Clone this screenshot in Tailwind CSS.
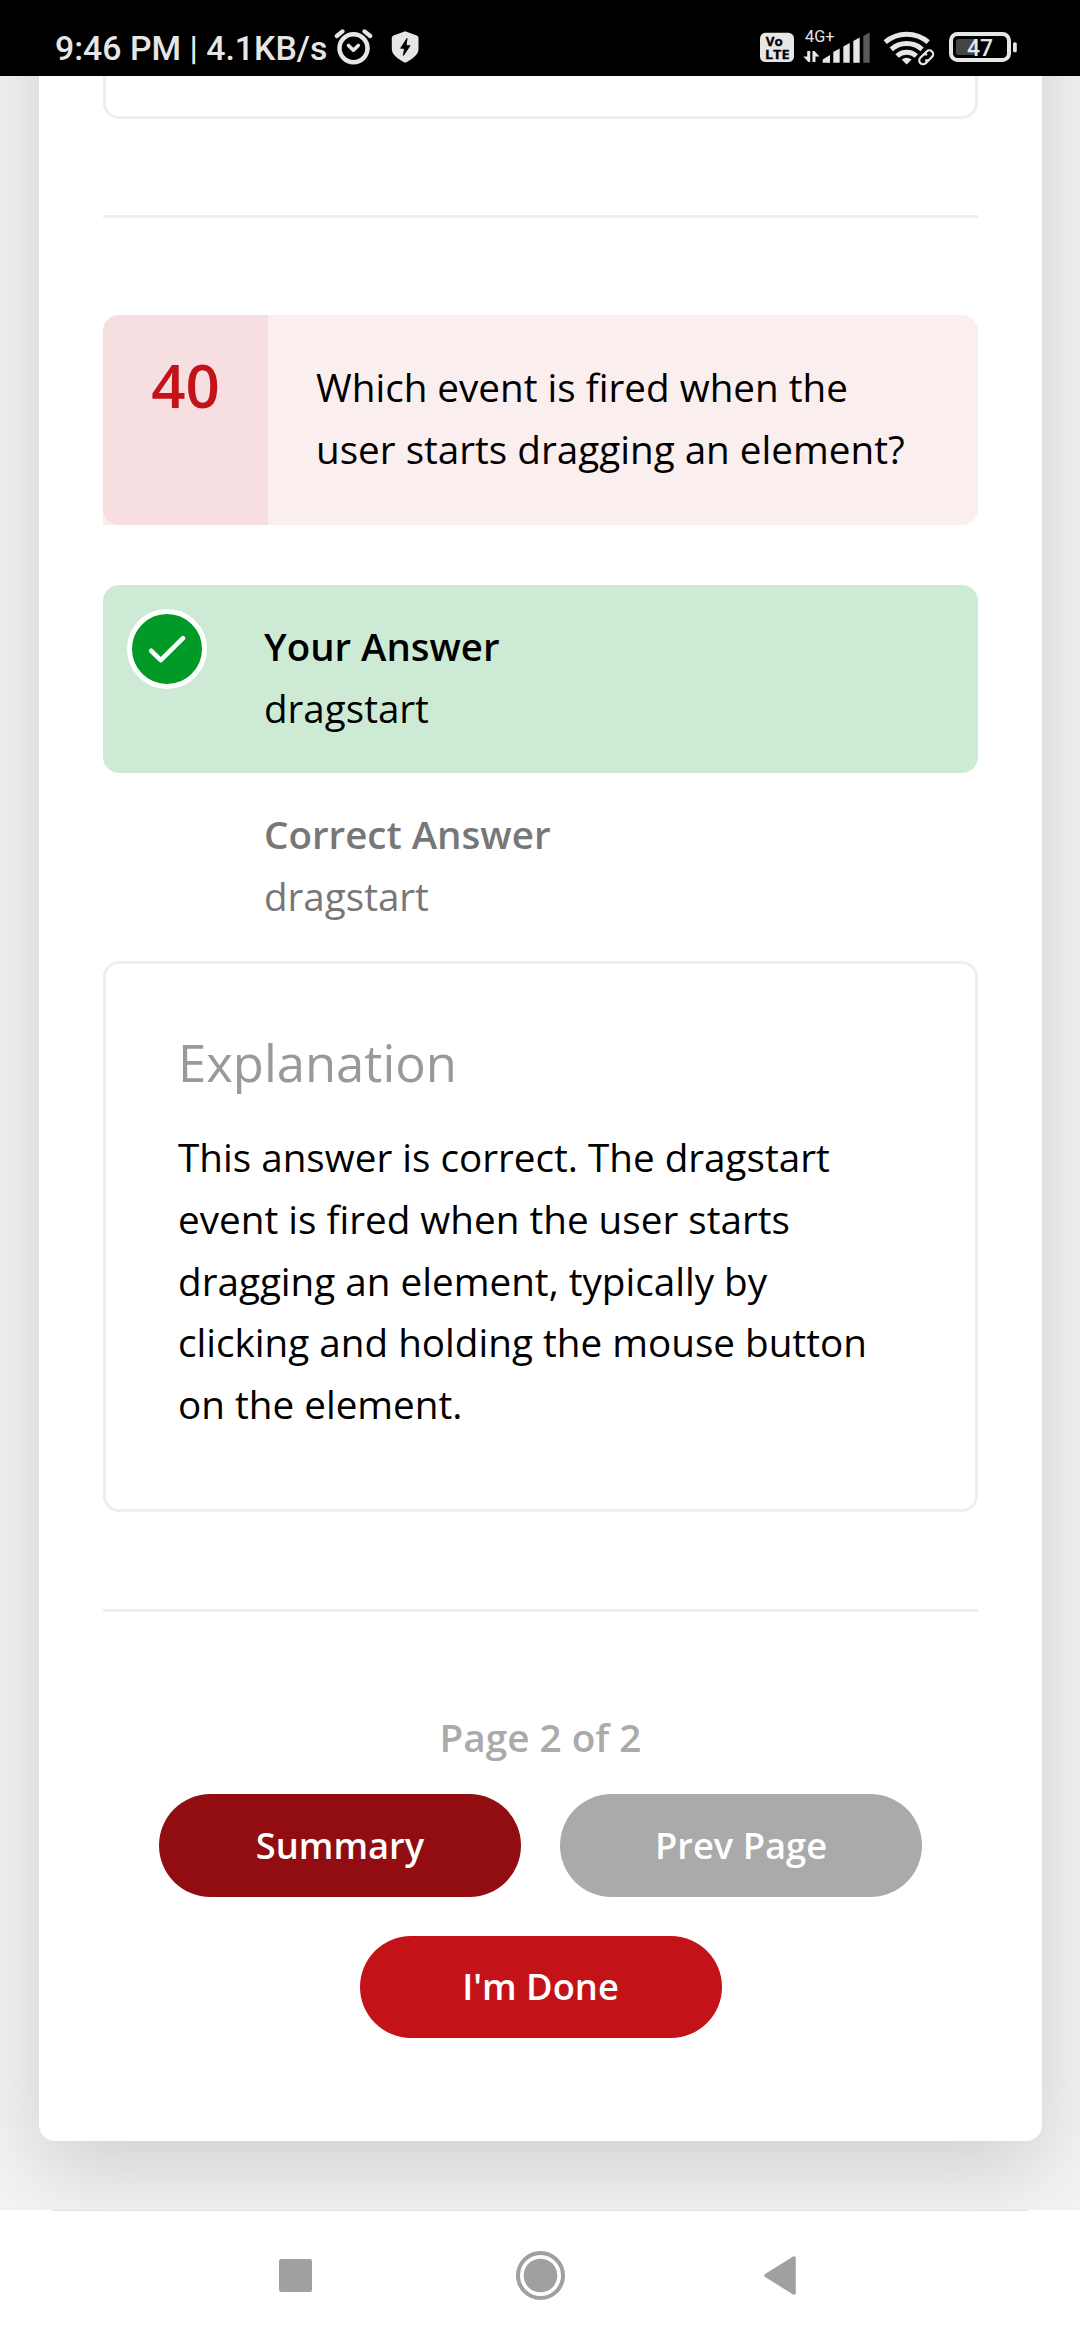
<!DOCTYPE html>
<html lang="en">
<head>
<meta charset="utf-8">
<title>Quiz Results</title>
<script src="https://cdn.jsdelivr.net/npm/@tailwindcss/browser@4"></script>
</head>
<body class="w-[1080px] h-[2340px] overflow-hidden bg-white text-black font-['Open_Sans',sans-serif]">

  <!-- Status bar -->
  <header class="flex h-[76px] items-start justify-between bg-black pt-[28px] pl-[55px] pr-[62px] text-[#e6e6e6]">
    <div class="flex items-start">
      <span class="w-[279px] whitespace-nowrap font-['Roboto',sans-serif] text-[33.8px] font-medium leading-[41px]">9:46 PM | 4.1KB/s</span>
      <svg class="h-[38px] w-[40px]" viewBox="0 0 40 38" fill="none" stroke="#e6e6e6" stroke-linecap="round">
        <circle cx="19.5" cy="20.3" r="14" stroke-width="4.500"/>
        <path d="M2.800 8 8.500 3.400M36.200 8 30.500 3.400" stroke-width="4.200"/>
        <path d="m14.500 17.500 4.900 4.700 4.900-4.700" stroke-width="3.600" stroke-linejoin="round"/>
      </svg>
      <svg class="ml-[17px] h-[38px] w-[29px]" viewBox="0 0 29 38">
        <path d="M14.200 3.200 25.800 7.400q1.700.7 1.700 2.400V21c0 6-6.500 10.400-13.300 13.700C7.400 31.400.8 27 .8 21V9.800q0-1.700 1.700-2.400z" fill="#e6e6e6"/>
        <path d="m16 10.500-6.300 9.700h3.900l-1.200 7.200 6.600-9.700h-4z" fill="#000" stroke="#000" stroke-width="1" stroke-linejoin="round"/>
      </svg>
    </div>
    <div class="flex items-start">
      <svg class="h-[38px] w-[34px]" viewBox="0 0 34 38" font-family="Open Sans, sans-serif" font-weight="700" stroke="#000" stroke-width="0.300">
        <rect y="4.800" width="34" height="29.200" rx="5.500" fill="#e6e6e6" stroke="none"/>
        <text x="5.700" y="17.800" font-size="12.500" textLength="17" lengthAdjust="spacingAndGlyphs">Vo</text>
        <text x="5" y="30.800" font-size="13" textLength="24.500" lengthAdjust="spacingAndGlyphs">LTE</text>
      </svg>
      <svg class="ml-[9px] h-[38px] w-[68px]" viewBox="0 0 68 38" fill="#e6e6e6">
        <text x="2" y="14" font-family="Roboto, sans-serif" font-size="16.300">4G+</text>
        <path d="M7.200 23v11H5.300L.3 28.600h3.900V23zM9.500 34V23h1.900l5 5.400h-3.900V34z"/>
        <path d="M19.700 31.500 27 27v7.700h-7.300zM30.300 24l6.400-3.500v14.200h-6.400zM40.300 18.500l6.400-3.500v19.700h-6.400zM50.300 13l6.400-3.500v25.200h-6.400z"/>
        <path d="M60.300 8l6.400-3.500v30.200h-6.400z" fill="#5a5a5a"/>
      </svg>
      <svg class="ml-[12px] h-[40px] w-[52px]" viewBox="0 0 52 40" fill="none" stroke="#e6e6e6">
        <path d="M2.200 14.200a33 33 0 0 1 43 0" stroke-width="5"/>
        <path d="M8.300 21.300a23.500 23.500 0 0 1 30.800 0" stroke-width="5"/>
        <path d="M14.100 28a14.500 14.500 0 0 1 19.200 0" stroke-width="5"/>
        <path d="M18.700 31.500q5-3.600 10 0l-5 5z" fill="#e6e6e6" stroke="none"/>
        <g transform="rotate(-45 43.200 29.300)">
          <rect x="33" y="23" width="20" height="12.600" rx="6.300" fill="#000" stroke="none"/>
          <path d="M45 33.100h-6.200a3.800 3.800 0 0 1 0-7.600h3.300a3.800 3.800 0 0 1 3.600 2.600M41.400 25.500h6.200a3.800 3.800 0 0 1 0 7.600h-3.300a3.800 3.800 0 0 1-3.600-2.600" stroke-width="2.200"/>
        </g>
      </svg>
      <svg class="ml-[14px] h-[38px] w-[69px]" viewBox="0 0 69 38">
        <rect x="2" y="6" width="58" height="26" rx="6.500" fill="none" stroke="#e6e6e6" stroke-width="4"/>
        <path d="M9.500 11H26v16H9.500q-2.500 0-2.500-2.500v-11Q7 11 9.500 11z" fill="#444"/>
        <rect x="64" y="14.200" width="3.800" height="10" rx="1.500" fill="#e6e6e6"/>
        <text x="18" y="28" font-family="Roboto, sans-serif" font-weight="500" font-size="23" fill="#e6e6e6">47</text>
      </svg>
    </div>
  </header>

  <!-- Scrolled page -->
  <main class="h-[2134px] overflow-hidden bg-[#f3f3f3] pl-[39px]">
    <div class="-mt-[300px] h-[2365px] w-[1003px] rounded-[16px] bg-white px-[64px] pt-[200px] shadow-[0_27.5px_82.5px_rgba(0,0,0,0.15)]">
      <section class="h-[143px] rounded-[16px] border-[3px] border-[#eee]"></section>
      <hr class="mt-[96px] h-[3px] border-0 bg-[#eee]">

      <section class="mt-[97px]">
        <div class="flex h-[210px] rounded-r-[16px] rounded-tl-[16px] bg-[#faeeee]">
          <div class="w-[165px] rounded-l-[16px] bg-[#f6dee1] pt-[40px] text-center text-[60px] font-semibold leading-[60px] text-[#c31218]">40</div>
          <p class="pt-[42px] pl-[48px] text-[38.65px] leading-[61.8px]">Which event is fired when the<br>user starts dragging an element?</p>
        </div>

        <div class="mt-[60px] flex h-[188px] rounded-[16px] bg-[#cdebd4] pl-[24px] text-[38.6px] leading-[61.8px]">
          <div class="mt-[24px] flex h-[80px] w-[80px] items-center justify-center rounded-full border-[5px] border-white bg-[#029a26]">
            <svg class="h-[40px] w-[40px]" viewBox="0 0 40 40" fill="none" stroke="#fff" stroke-width="4.600" stroke-linecap="round" stroke-linejoin="round"><path d="m4.200 21.800 9.600 9.400L36 9.200"/></svg>
          </div>
          <div class="pt-[31px] pl-[57px]">
            <h4 class="text-[38.4px] font-semibold">Your Answer</h4>
            <p>dragstart</p>
          </div>
        </div>

        <div class="h-[188px] pt-[31px] pl-[161px] text-[38.6px] leading-[61.8px] text-[#777]">
          <h4 class="text-[38.5px] font-semibold">Correct Answer</h4>
          <p>dragstart</p>
        </div>

        <div class="h-[551px] rounded-[16px] border-[3px] border-[#eee] pt-[68px] pl-[72px]">
          <h3 class="text-[50.8px] leading-[62px] text-[#999]">Explanation</h3>
          <p class="mt-[33px] text-[38.65px] leading-[61.8px]">This answer is correct. The dragstart<br>event is fired when the user starts<br>dragging an element, typically by<br>clicking and holding the mouse button<br>on the element.</p>
        </div>
      </section>

      <hr class="mt-[97px] h-[3px] border-0 bg-[#eee]">

      <footer class="flex flex-col items-center pt-[94px]">
        <p class="text-[38.7px] font-semibold leading-[62px] text-[#aaa]">Page 2 of 2</p>
        <div class="mt-[26px] flex flex-wrap justify-center gap-[39px] text-[36.3px] font-semibold text-white">
          <button class="h-[103px] w-[362px] rounded-full bg-[#910d12] pb-px">Summary</button>
          <button class="h-[103px] w-[362px] rounded-full bg-[#aaa] pb-px">Prev Page</button>
          <button class="h-[102px] w-[362px] rounded-full bg-[#c31218] pb-[2px]">I'm Done</button>
        </div>
      </footer>
    </div>
  </main>

  <!-- System navigation -->
  <nav class="h-[130px] bg-white">
    <div class="mx-[52px] h-px bg-[#e2e2e2]"></div>
    <div class="flex items-center pt-[40px] pl-[279px]">
      <div class="h-[33px] w-[33px] rounded-[2px] bg-[#a0a0a0]"></div>
      <svg class="ml-[204px] h-[49px] w-[49px]" viewBox="0 0 49 49"><circle cx="24.500" cy="24.500" r="22.500" fill="none" stroke="#a0a0a0" stroke-width="4"/><circle cx="24.500" cy="24.500" r="16.800" fill="#a0a0a0"/></svg>
      <svg class="ml-[199px] h-[39px] w-[33px]" viewBox="0 0 33 39"><path d="M2 19.500 30 2v35z" fill="#a0a0a0" stroke="#a0a0a0" stroke-width="3.500" stroke-linejoin="round"/></svg>
    </div>
  </nav>
</body>
</html>
